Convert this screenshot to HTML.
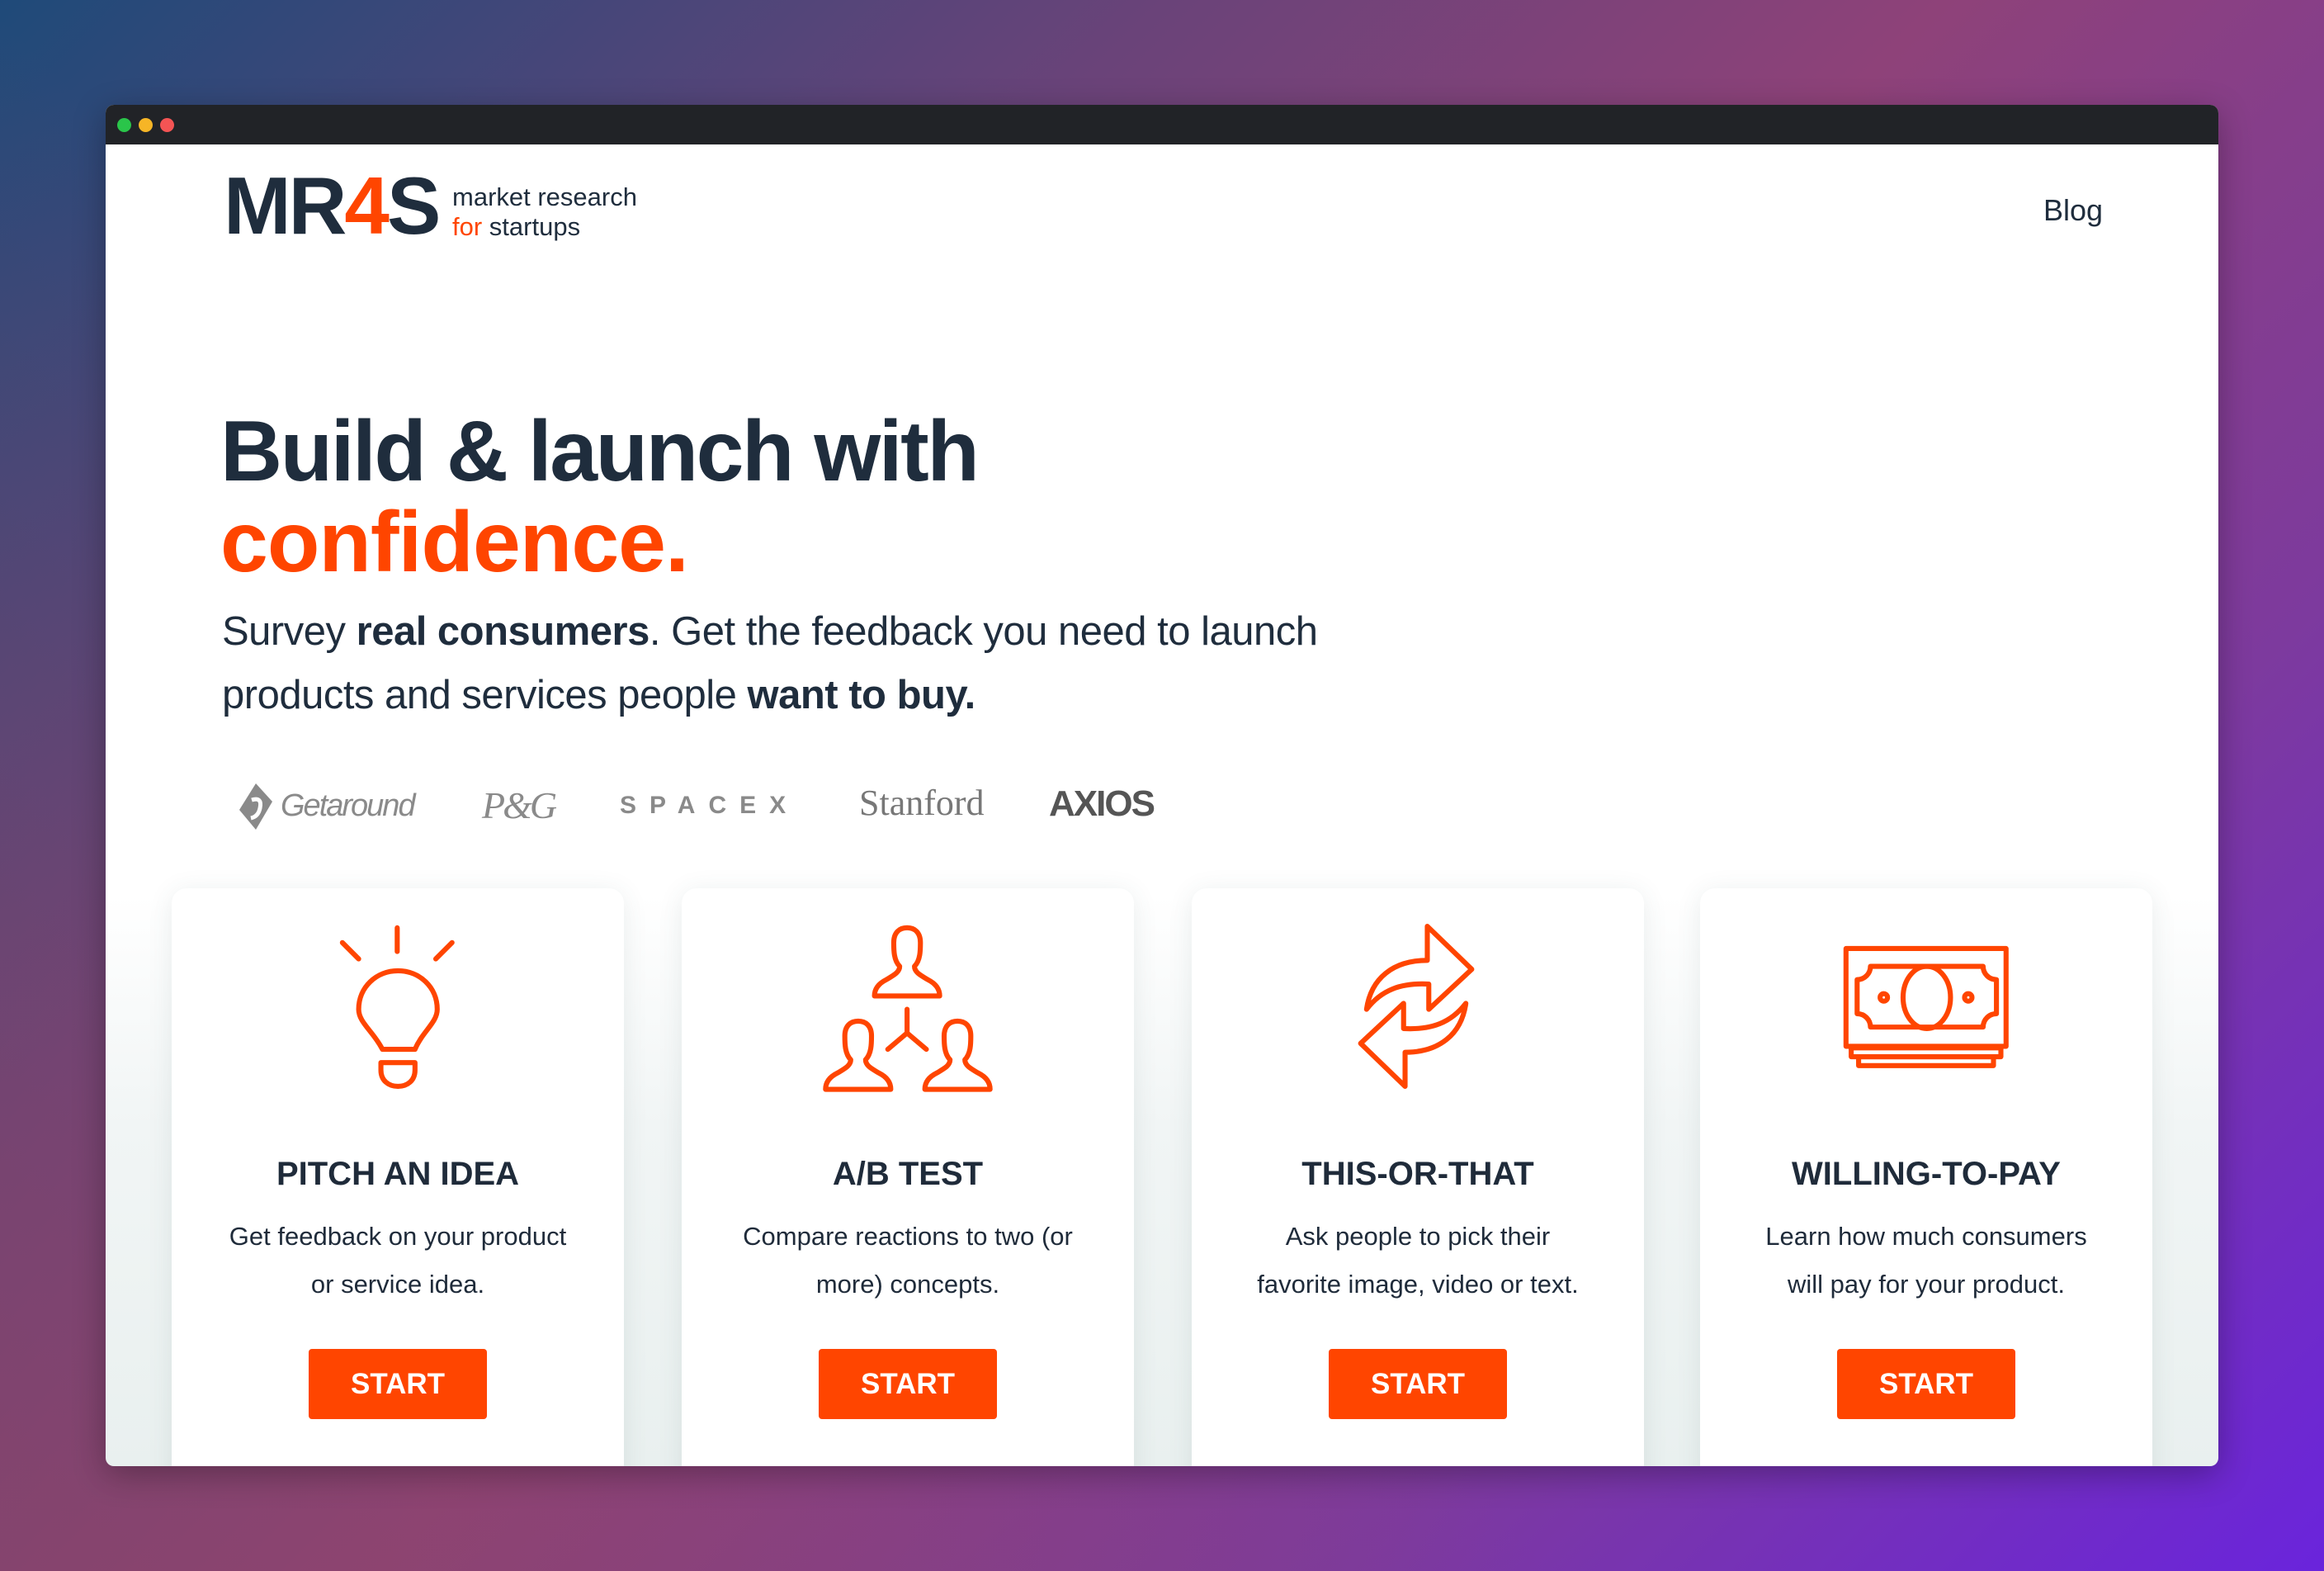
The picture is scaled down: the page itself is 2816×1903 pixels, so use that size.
<!DOCTYPE html>
<html><head><meta charset="utf-8"><style>
*{margin:0;padding:0;box-sizing:border-box}
html,body{width:2816px;height:1903px;overflow:hidden}
body{position:relative;font-family:"Liberation Sans",Arial,sans-serif;color:#1f2b3a;
background:linear-gradient(135deg,#1f4a79 0%,#6a4379 30%,#8e4279 50%,#7d3a9e 75%,#6a24dc 100%);}
.bgfix{position:absolute;inset:0;background:linear-gradient(45deg,rgba(140,70,100,0.55) 0%,rgba(140,70,100,0) 40%,rgba(0,0,0,0) 60%,rgba(160,70,130,0.0) 100%)}
.win{position:absolute;left:128px;top:127px;width:2560px;height:1649px;border-radius:10px;overflow:hidden;
background:linear-gradient(180deg,#fff 0%,#fff 58%,#f1f5f5 75%,#e9f0ef 100%);box-shadow:0 10px 40px rgba(0,0,0,.3)}
.bar{position:absolute;left:0;top:0;width:100%;height:48px;background:#212327}
.dot{position:absolute;top:16px;width:17px;height:17px;border-radius:50%}
.abs{position:absolute;white-space:nowrap}
.card{position:absolute;top:949px;width:548px;height:760px;background:#fff;border-radius:18px;box-shadow:0 4px 30px rgba(60,90,90,.10)}
.ct{position:absolute;left:0;width:100%;text-align:center;top:324px;font-size:40px;font-weight:bold;color:#1f2b3a}
.cd{position:absolute;left:0;width:100%;text-align:center;top:393px;font-size:31px;line-height:58px;color:#1f2b3a}
.btn{position:absolute;left:166px;top:558px;width:216px;height:85px;background:#ff4500;border-radius:4px;color:#fff;font-size:35px;font-weight:bold;text-align:center;line-height:85px}
</style></head><body>
<div class="bgfix"></div>
<div class="win">
<div class="bar"></div>
<div class="dot" style="left:14px;background:#2ac54a"></div>
<div class="dot" style="left:40px;background:#f6b526"></div>
<div class="dot" style="left:66px;background:#f45454"></div>

<div class="abs" style="left:143px;top:67px;font-size:98px;font-weight:bold;letter-spacing:-3px;color:#1f2d3d;line-height:110px">MR<span style="color:#ff4500">4</span>S</div>
<div class="abs" style="left:420px;top:94px;font-size:31px;line-height:36px;color:#1f2d3d">market research<br><span style="color:#ff4500">for</span> startups</div>
<div class="abs" style="left:2348px;top:106px;font-size:36px;line-height:44px;color:#1f2d3d">Blog</div>

<div class="abs" style="left:139px;top:365px;font-size:104px;font-weight:bold;letter-spacing:-2.5px;line-height:110px;color:#1f2d3d">Build &amp; launch with</div>
<div class="abs" style="left:139px;top:475px;font-size:104px;font-weight:bold;letter-spacing:-1px;line-height:110px;color:#ff4500">confidence.</div>
<div class="abs" style="left:141px;top:600px;font-size:49px;line-height:77px;color:#1f2d3d;letter-spacing:-0.5px">Survey <b>real consumers</b>. Get the feedback you need to launch<br>products and services people <b>want to buy.</b></div>

<div class="abs" style="left:152px;top:820px;width:60px;height:60px">
<svg width="60" height="60" viewBox="0 0 60 60"><path d="M30 2 L50 24 L30 58 L10 34 Z" fill="#8a8a8a"/><path d="M25 22 Q38 18 35 32 Q33 42 24 44" stroke="#fff" stroke-width="5" fill="none"/></svg></div>
<div class="abs" style="left:212px;top:828px;font-size:38px;font-style:italic;color:#8a8a8a;letter-spacing:-2px">Getaround</div>
<div class="abs" style="left:456px;top:822px;font-size:46px;font-style:italic;font-family:'Liberation Serif',serif;color:#8a8a8a;letter-spacing:-3px">P&amp;G</div>
<div class="abs" style="left:623px;top:832px;font-size:30px;font-weight:bold;color:#8a8a8a;letter-spacing:16px">SPACEX</div>
<div class="abs" style="left:913px;top:820px;font-size:44px;font-family:'Liberation Serif',serif;color:#777">Stanford</div>
<div class="abs" style="left:1143px;top:822px;font-size:44px;font-weight:bold;color:#555;letter-spacing:-2px">AXIOS</div>

<div class="card" style="left:80px"><div class="ct">PITCH AN IDEA</div><div class="cd">Get feedback on your product<br>or service idea.</div><div class="btn">START</div></div>
<div class="card" style="left:698px"><div class="ct">A/B TEST</div><div class="cd">Compare reactions to two (or<br>more) concepts.</div><div class="btn">START</div></div>
<div class="card" style="left:1316px"><div class="ct">THIS-OR-THAT</div><div class="cd">Ask people to pick their<br>favorite image, video or text.</div><div class="btn">START</div></div>
<div class="card" style="left:1932px"><div class="ct">WILLING-TO-PAY</div><div class="cd">Learn how much consumers<br>will pay for your product.</div><div class="btn">START</div></div>
</div>

<svg style="position:absolute;left:0;top:0" width="2816" height="1903" viewBox="0 0 1568 1060" preserveAspectRatio="none">
<g fill="none" stroke="#ff4500" stroke-width="3.4" stroke-linecap="round" stroke-linejoin="round">
<path d="M268 626 L268 642 M231 636 L242 647 M305 636 L294 647"/>
<path d="M258 708 C252 696 242 690 242 681 C242 666 254 655 268.5 655 C283 655 295 666 295 681 C295 690 285 696 280 708 Z"/>
<path d="M257 717 L280 717 L280 722 C280 729 275 733 268.5 733 C262 733 257 729 257 722 Z"/>
<g transform="translate(612 626)"><path d="M-5 26 C-9 22 -9 15 -9 10 C-9 3 -5 0 0 0 C5 0 9 3 9 10 C9 15 9 22 5 26 C5 30 9 32 14 35 C20 38 22 42 22 46 L-22 46 C-22 42 -20 38 -14 35 C-9 32 -5 30 -5 26 Z"/></g>
<g transform="translate(579 689)"><path d="M-5 26 C-9 22 -9 15 -9 10 C-9 3 -5 0 0 0 C5 0 9 3 9 10 C9 15 9 22 5 26 C5 30 9 32 14 35 C20 38 22 42 22 46 L-22 46 C-22 42 -20 38 -14 35 C-9 32 -5 30 -5 26 Z"/></g>
<g transform="translate(646 689)"><path d="M-5 26 C-9 22 -9 15 -9 10 C-9 3 -5 0 0 0 C5 0 9 3 9 10 C9 15 9 22 5 26 C5 30 9 32 14 35 C20 38 22 42 22 46 L-22 46 C-22 42 -20 38 -14 35 C-9 32 -5 30 -5 26 Z"/></g>
<path d="M612 681 L612 697 L599 708 M612 697 L625 708"/>
<path d="M922 681 C925 660 940 648 963 648 L963 625 L993 654 L964 681 L964 664 C945 663 932 668 922 681 Z"/>
<path transform="rotate(180 955.5 679)" d="M922 681 C925 660 940 648 963 648 L963 625 L993 654 L964 681 L964 664 C945 663 932 668 922 681 Z"/>
<rect x="1245.5" y="640" width="108" height="66"/>
<path d="M1262 652 L1338 652 C1338 657 1342 661 1347 661 L1347 684 C1342 684 1338 688 1338 693 L1262 693 C1262 688 1258 684 1253 684 L1253 661 C1258 661 1262 657 1262 652 Z"/>
<ellipse cx="1300" cy="673" rx="16" ry="21"/>
<circle cx="1271" cy="673" r="2.5"/><circle cx="1328" cy="673" r="2.5"/>
<rect x="1249" y="707" width="101" height="6"/>
<rect x="1254" y="713" width="91" height="6"/>
</g></svg>
</body></html>
